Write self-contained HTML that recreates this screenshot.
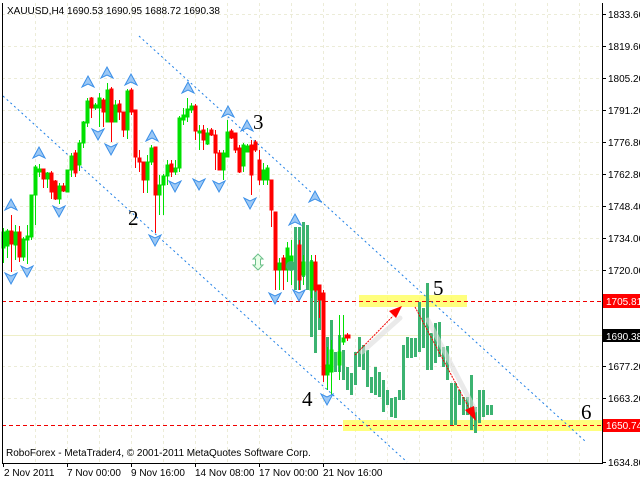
<!DOCTYPE html>
<html><head><meta charset="utf-8"><style>
html,body{margin:0;padding:0;background:#fff;width:640px;height:480px;overflow:hidden}
svg{display:block}
text{font-family:"Liberation Sans",sans-serif}
text.w{font-family:"Liberation Serif",serif}
</style></head><body>
<svg width="640" height="480" viewBox="0 0 640 480" xmlns="http://www.w3.org/2000/svg">
<rect width="640" height="480" fill="#fff"/>
<g stroke="#ECECD8" stroke-width="1" stroke-dasharray="3,3">
<path d="M2 14.5H602M2 46.5H602M2 78.5H602M2 110.5H602M2 142.5H602M2 174.5H602M2 206.5H602M2 238.5H602M2 270.5H602M2 366.5H602M2 398.5H602"/>
<path d="M35.5 3V463M67.5 3V463M99.5 3V463M131.5 3V463M163.5 3V463M195.5 3V463M227.5 3V463M259.5 3V463M291.5 3V463M323.5 3V463M355.5 3V463M387.5 3V463M419.5 3V463M451.5 3V463M483.5 3V463M515.5 3V463M547.5 3V463M579.5 3V463"/>
</g>
<rect x="359" y="295" width="108" height="12" fill="#FFFF66" opacity="0.85"/>
<rect x="343" y="420" width="259" height="11" fill="#FFFF66" opacity="0.85"/>
<line x1="2" y1="335.5" x2="602" y2="335.5" stroke="#EFEFC8"/>
<g stroke="#F00000" stroke-dasharray="4,3"><line x1="2" y1="301.5" x2="602" y2="301.5"/><line x1="2" y1="425.5" x2="602" y2="425.5"/></g>
<g stroke="#1E7FE6" stroke-dasharray="2,3"><line x1="139" y1="36" x2="585" y2="441"/><line x1="3" y1="96" x2="407" y2="462"/></g>
<g fill="#3CB371">
<rect x="294" y="227" width="3" height="63"/><rect x="298" y="227" width="3" height="63"/><rect x="302" y="222" width="3" height="55"/><rect x="306" y="225" width="3" height="65"/><rect x="310" y="260" width="3" height="77"/><rect x="314" y="268" width="3" height="85"/><rect x="318" y="285" width="3" height="45"/><rect x="326" y="337" width="3" height="38"/><rect x="330" y="320" width="3" height="52"/><rect x="334" y="352" width="3" height="20"/><rect x="338" y="335" width="3" height="37"/><rect x="342" y="350" width="3" height="30"/><rect x="346" y="367" width="3" height="23"/><rect x="350" y="373" width="3" height="22"/><rect x="354" y="352" width="3" height="33"/><rect x="358" y="337" width="3" height="30"/><rect x="362" y="345" width="3" height="25"/><rect x="366" y="350" width="3" height="37"/><rect x="370" y="377" width="3" height="16"/><rect x="374" y="367" width="3" height="28"/><rect x="378" y="372" width="3" height="25"/><rect x="382" y="380" width="3" height="32"/><rect x="386" y="390" width="3" height="15"/><rect x="390" y="398" width="3" height="19"/><rect x="394" y="397" width="3" height="21"/><rect x="398" y="390" width="3" height="10"/><rect x="402" y="345" width="3" height="55"/><rect x="406" y="337" width="3" height="21"/><rect x="410" y="338" width="3" height="20"/><rect x="414" y="338" width="3" height="19"/><rect x="418" y="302" width="3" height="50"/><rect x="422" y="308" width="3" height="40"/><rect x="426" y="283" width="3" height="87"/><rect x="430" y="333" width="3" height="37"/><rect x="434" y="323" width="3" height="40"/><rect x="438" y="322" width="3" height="35"/><rect x="442" y="347" width="3" height="20"/><rect x="446" y="346" width="3" height="34"/><rect x="450" y="383" width="3" height="42"/><rect x="454" y="383" width="3" height="42"/><rect x="458" y="390" width="3" height="15"/><rect x="462" y="397" width="3" height="18"/><rect x="466" y="397" width="3" height="18"/><rect x="470" y="375" width="3" height="55"/><rect x="474" y="407" width="3" height="26"/><rect x="478" y="390" width="3" height="33"/><rect x="482" y="390" width="3" height="27"/><rect x="486" y="405" width="3" height="10"/><rect x="490" y="405" width="3" height="10"/>
</g>
<g>
<g stroke="#00E000" fill="#00E000">
<path d="M3.5 228V263M7.5 229V258M15.5 225V260M23.5 237V261M27.5 225V264M31.5 195V240M35.5 165V225M39.5 164V177M47.5 172V188M59.5 183V204M67.5 170V192M71.5 153V177M79.5 140V171M83.5 121V148M87.5 98V127M95.5 103V110M99.5 93V127M107.5 83V122M115.5 100V122M127.5 89V139M147.5 155V193M151.5 145V165M159.5 175V215M163.5 174V215M167.5 160V185M175.5 160V175M179.5 116V172M183.5 108V125M187.5 98V122M191.5 103V113M199.5 125V150M207.5 128V145M223.5 150V180M227.5 120V157M243.5 143V172M247.5 144V152M263.5 163V185M267.5 165V185M279.5 258V290M287.5 242V282M291.5 240V285M303.5 255V285M311.5 255V298M327.5 347V390M331.5 340V395M339.5 315V380M343.5 315V345" fill="none"/>
<rect x="2" y="232" width="3" height="16"/><rect x="6" y="231" width="3" height="15"/><rect x="14" y="232" width="3" height="13"/><rect x="22" y="239" width="3" height="18"/><rect x="26" y="236" width="3" height="4"/><rect x="30" y="195" width="3" height="42"/><rect x="34" y="167" width="3" height="28"/><rect x="38" y="169" width="3" height="3"/><rect x="46" y="173" width="3" height="6"/><rect x="58" y="186" width="3" height="13"/><rect x="66" y="170" width="3" height="22"/><rect x="70" y="156" width="3" height="14"/><rect x="78" y="143" width="3" height="22"/><rect x="82" y="122" width="3" height="21"/><rect x="86" y="101" width="3" height="22"/><rect x="94" y="105" width="3" height="3"/><rect x="98" y="98" width="3" height="10"/><rect x="106" y="90" width="3" height="32"/><rect x="114" y="105" width="3" height="17"/><rect x="126" y="91" width="3" height="39"/><rect x="146" y="162" width="3" height="18"/><rect x="150" y="148" width="3" height="14"/><rect x="158" y="185" width="3" height="10"/><rect x="162" y="176" width="3" height="9"/><rect x="166" y="165" width="3" height="11"/><rect x="174" y="168" width="3" height="4"/><rect x="178" y="118" width="3" height="50"/><rect x="182" y="115" width="3" height="5"/><rect x="186" y="109" width="3" height="8"/><rect x="190" y="106" width="3" height="4"/><rect x="198" y="131" width="3" height="2"/><rect x="206" y="133" width="3" height="11"/><rect x="222" y="153" width="3" height="17"/><rect x="226" y="132" width="3" height="25"/><rect x="242" y="145" width="3" height="21"/><rect x="246" y="146" width="3" height="6"/><rect x="262" y="170" width="3" height="10"/><rect x="266" y="168" width="3" height="12"/><rect x="278" y="263" width="3" height="7"/><rect x="286" y="248" width="3" height="22"/><rect x="290" y="256" width="3" height="12"/><rect x="302" y="262" width="3" height="13"/><rect x="310" y="262" width="3" height="28"/><rect x="326" y="365" width="3" height="10"/><rect x="330" y="350" width="3" height="22"/><rect x="338" y="352" width="3" height="13"/><rect x="342" y="338" width="3" height="4"/>
</g>
<g stroke="#FF0000" fill="#FF0000">
<path d="M11.5 215V272M19.5 226V262M43.5 170V188M51.5 171V199M55.5 180V200M63.5 183V192M75.5 150V177M91.5 97V118M103.5 98V127M111.5 87V142M119.5 100V120M123.5 112V137M131.5 88V115M135.5 110V168M139.5 150V172M143.5 162V193M155.5 147V233M171.5 160V177M195.5 104V140M203.5 125V150M211.5 128V136M215.5 130V170M219.5 150V170M231.5 129V139M235.5 133V153M239.5 145V173M251.5 140V195M255.5 140V152M259.5 150V185M271.5 180V227M275.5 212V290M283.5 255V290M299.5 240V290M315.5 255V292M319.5 285V318M323.5 290V382M347.5 333V341" fill="none"/>
<rect x="10" y="231" width="3" height="13"/><rect x="18" y="232" width="3" height="25"/><rect x="42" y="169" width="3" height="10"/><rect x="50" y="173" width="3" height="19"/><rect x="54" y="181" width="3" height="18"/><rect x="62" y="186" width="3" height="5"/><rect x="74" y="153" width="3" height="20"/><rect x="90" y="98" width="3" height="10"/><rect x="102" y="100" width="3" height="12"/><rect x="110" y="89" width="3" height="33"/><rect x="118" y="104" width="3" height="8"/><rect x="122" y="112" width="3" height="18"/><rect x="130" y="90" width="3" height="22"/><rect x="134" y="110" width="3" height="47"/><rect x="138" y="158" width="3" height="4"/><rect x="142" y="162" width="3" height="18"/><rect x="154" y="147" width="3" height="48"/><rect x="170" y="164" width="3" height="8"/><rect x="194" y="106" width="3" height="25"/><rect x="202" y="130" width="3" height="10"/><rect x="210" y="130" width="3" height="5"/><rect x="214" y="135" width="3" height="18"/><rect x="218" y="153" width="3" height="17"/><rect x="230" y="131" width="3" height="7"/><rect x="234" y="133" width="3" height="17"/><rect x="238" y="148" width="3" height="24"/><rect x="250" y="145" width="3" height="30"/><rect x="254" y="142" width="3" height="8"/><rect x="258" y="160" width="3" height="20"/><rect x="270" y="180" width="3" height="30"/><rect x="274" y="212" width="3" height="58"/><rect x="282" y="258" width="3" height="12"/><rect x="298" y="245" width="3" height="35"/><rect x="314" y="262" width="3" height="28"/><rect x="318" y="285" width="3" height="15"/><rect x="322" y="293" width="3" height="82"/><rect x="345" y="335" width="5" height="3"/>
</g>
</g>
<circle cx="291" cy="266" r="5" fill="#3CB371"/>
<defs>
<path id="up" d="M0 -6 L6 5 L0 2 L-6 5 Z" fill="#9CC8F5" stroke="#3A8FE8" stroke-width="1"/>
<path id="dn" d="M0 6 L6 -5 L0 -2 L-6 -5 Z" fill="#9CC8F5" stroke="#3A8FE8" stroke-width="1"/>
</defs>
<g>
<use href="#up" x="39" y="153"/><use href="#up" x="11" y="205"/><use href="#up" x="88" y="82"/><use href="#up" x="107" y="73"/><use href="#up" x="131" y="80"/><use href="#up" x="152" y="136"/><use href="#up" x="188" y="88"/><use href="#up" x="228" y="112"/><use href="#up" x="247" y="126"/><use href="#up" x="295" y="220"/><use href="#up" x="315" y="197"/>
<use href="#dn" x="59" y="211"/><use href="#dn" x="98" y="134"/><use href="#dn" x="111" y="149"/><use href="#dn" x="155" y="240"/><use href="#dn" x="175" y="186"/><use href="#dn" x="199" y="184"/><use href="#dn" x="219" y="186"/><use href="#dn" x="250" y="203"/><use href="#dn" x="11" y="278"/><use href="#dn" x="27" y="271"/><use href="#dn" x="275" y="298"/><use href="#dn" x="299" y="295"/><use href="#dn" x="327" y="399"/>
</g>
<path d="M258 254 L263 259 L260.5 259 L260.5 265 L263 265 L258 270 L253 265 L255.5 265 L255.5 259 L253 259 Z" fill="#E8FFE8" stroke="#6CC08A"/>
<g stroke="#ddd" stroke-width="5" opacity="0.6" stroke-linecap="round"><line x1="362" y1="352" x2="400" y2="318"/><line x1="428" y1="320" x2="475" y2="410"/></g>
<g stroke="#F00000" stroke-dasharray="2,1" fill="none"><line x1="355" y1="355" x2="393" y2="316"/><line x1="415" y1="307" x2="470" y2="410"/></g>
<path d="M402 306 L389 311 L396 318 Z" fill="#F00"/>
<path d="M476 421 L465 410 L474 406 Z" fill="#F00"/>
<g font-size="21" fill="#000">
<text class="w" x="128" y="225">2</text><text class="w" x="253" y="129">3</text><text class="w" x="302" y="406">4</text><text class="w" x="433" y="295">5</text><text class="w" x="581" y="419">6</text>
</g>
<path d="M2.5 3V463.5H602.5V3" fill="none" stroke="#000"/>
<g stroke="#000"><path d="M602 14.5h4M602 46.5h4M602 78.5h4M602 110.5h4M602 142.5h4M602 174.5h4M602 206.5h4M602 238.5h4M602 270.5h4M602 366.5h4M602 398.5h4M602 462.5h4"/></g>
<g font-size="10" fill="#000">
<text x="608" y="18">1833.60</text><text x="608" y="50">1819.60</text><text x="608" y="82">1805.20</text><text x="608" y="114">1791.20</text><text x="608" y="146">1776.80</text><text x="608" y="178">1762.80</text><text x="608" y="210">1748.40</text><text x="608" y="242">1734.00</text><text x="608" y="274">1720.00</text><text x="608" y="370">1677.20</text><text x="608" y="402">1663.20</text><text x="608" y="466">1634.80</text>
</g>
<rect x="603" y="294" width="37" height="14" fill="#F00"/><text x="606" y="305" font-size="10" fill="#fff">1705.81</text>
<rect x="603" y="329" width="37" height="13" fill="#000"/><text x="606" y="340" font-size="10" fill="#fff">1690.38</text>
<rect x="603" y="419" width="37" height="13" fill="#F00"/><text x="606" y="429" font-size="10" fill="#fff">1650.74</text>
<g stroke="#000"><path d="M3.5 463v4M67.5 463v4M131.5 463v4M195.5 463v4M259.5 463v4M323.5 463v4"/></g>
<g font-size="10" fill="#000">
<text x="4" y="476">2 Nov 2011</text><text x="67" y="476">7 Nov 00:00</text><text x="131" y="476">9 Nov 16:00</text><text x="195" y="476">14 Nov 08:00</text><text x="259" y="476">17 Nov 00:00</text><text x="323" y="476">21 Nov 16:00</text>
</g>
<text x="7" y="14" font-size="10" fill="#000">XAUUSD,H4  1690.53 1690.95 1688.72 1690.38</text>
<text x="6" y="456" font-size="10" fill="#000">RoboForex - MetaTrader4, © 2001-2011 MetaQuotes Software Corp.</text>
</svg>
</body></html>
